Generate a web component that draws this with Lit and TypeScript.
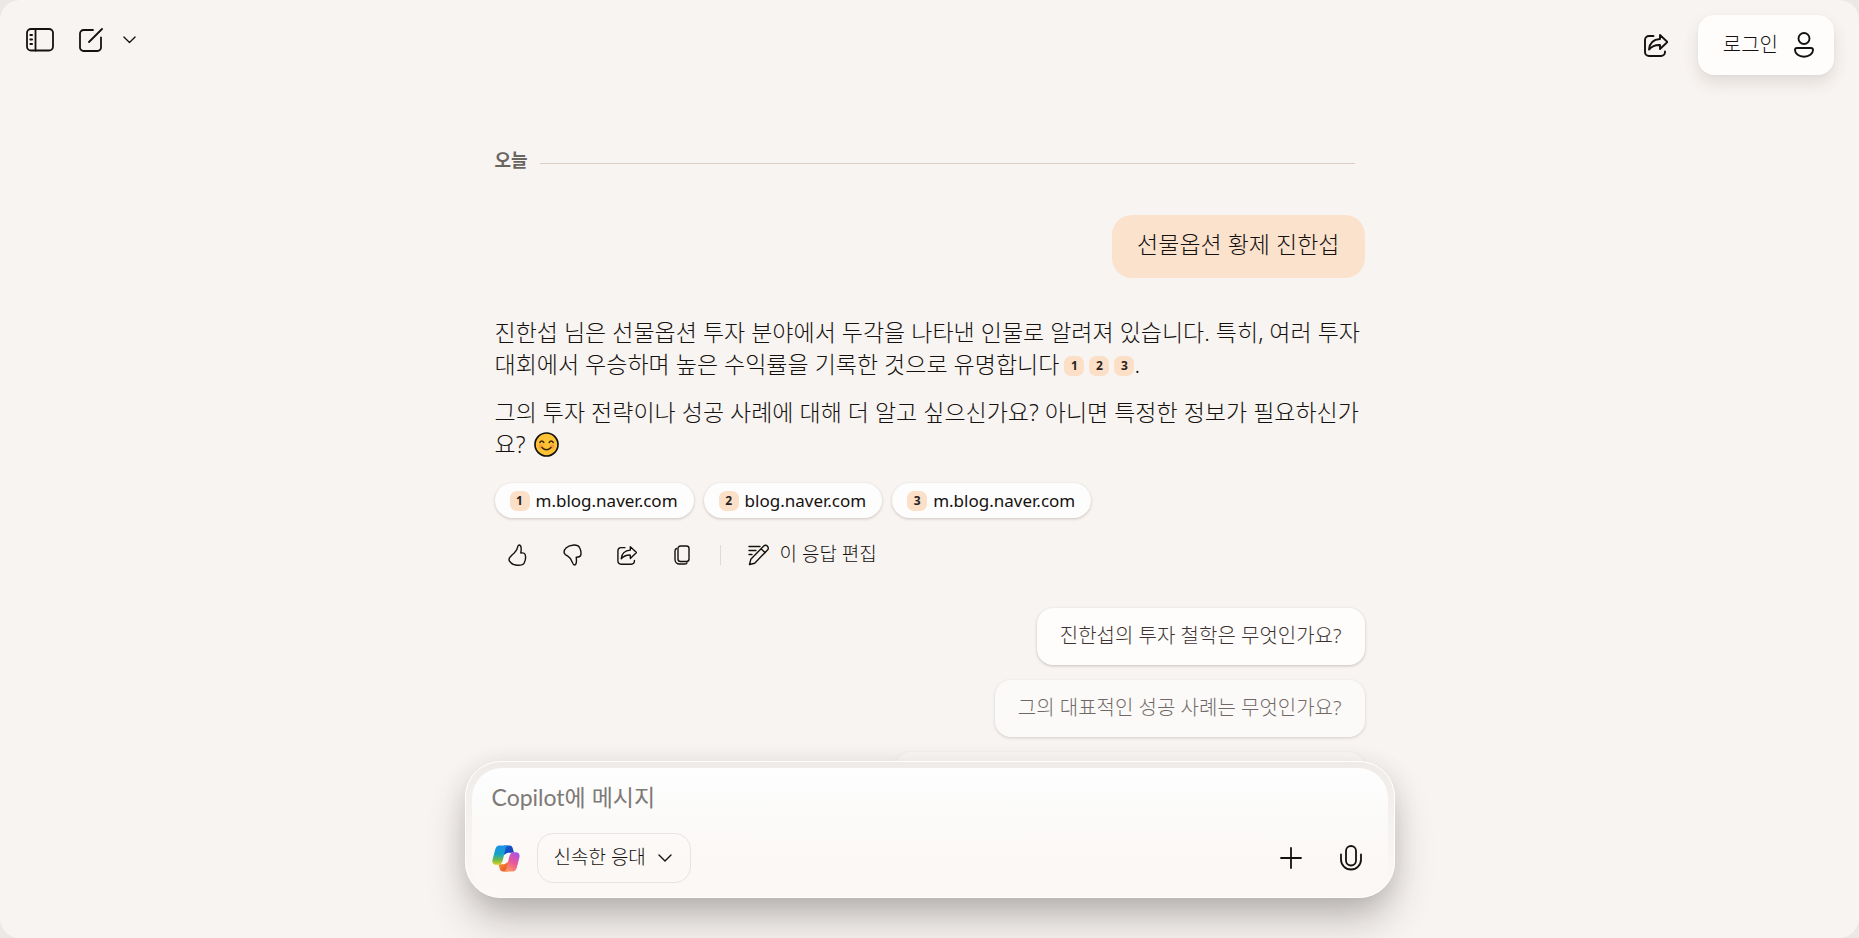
import { LitElement, html, css, svg } from "lit";
import { customElement, state } from "lit/decorators.js";

const icon = (w: number, h: number, body: unknown, sw = 1.5) => html`
  <svg class="icon" width=${w} height=${h} viewBox="0 0 ${w} ${h}" fill="none" stroke="currentColor"
    stroke-width=${sw} stroke-linecap="round" stroke-linejoin="round" aria-hidden="true">${body}</svg>`;

const sidebarIcon = icon(28, 24, svg`
  <rect x="1" y="1" width="26" height="21.5" rx="4"/>
  <path d="M9.5 1v21.5M4.3 7h1.8M4.3 11.5h1.8M4.3 16h1.8"/>`, 1.8);
const composeIcon = icon(24, 24, svg`
  <path d="M14 2H4.5A3.5 3.5 0 0 0 1 5.500v14A3.500 3.500 0 0 0 4.500 23H18.500a3.500 3.500 0 0 0 3.500-3.500V9.500M23 1 10 14"/>`, 1.8);
const sharePath = svg`
  <path d="M9.500 2H5A4 4 0 0 0 1 6v12a4 4 0 0 0 4 4h12a4 4 0 0 0 4-4v-.5"/>
  <path d="M16 1l7.500 7L16 15v-4c-5-.3-8 1.200-11 4.500C5.500 9.500 9 5.500 16 5V1z"/>`;
const shareIcon = icon(24, 23, sharePath, 1.9);
const shareSmall = html`<svg class="icon" width="20" height="19" viewBox="0 0 24 23" fill="none" stroke="currentColor"
  stroke-width="1.700" stroke-linecap="round" stroke-linejoin="round" aria-hidden="true">${sharePath}</svg>`;
const personIcon = icon(20, 26, svg`
  <circle cx="10" cy="6.500" r="5.500"/>
  <path d="M3 16h14a2 2 0 0 1 2 2c0 4-4 6.700-9 6.700S1 22 1 18a2 2 0 0 1 2-2z"/>`, 1.9);
const upIcon = icon(19, 22, svg`<path d="M11.200 1C10 1 9.700 2.500 9.400 3.800 8.800 6.500 6.500 8.800 4 11 2.300 12.600.9 14 1 15.600c.1 1.500 1 2 1.900 3.100 1 1.500 3 2.400 6 2.500 3.200.2 6.200 0 7.300-2.200 1.200-2.400 1.600-6.500.9-8.600-.5-1.400-2-1.700-4.300-1.400.5-3 .9-8-1.600-8z"/>`, 1.4);
const downIcon = icon(19, 22, svg`<path d="M11.500 21c-1.300 0-1.700-1.500-2.200-2.800-.9-2.500-2.300-4.700-4.500-6-2.200-1.200-3.700-2.300-3.700-4C1 6.500 2 5 3.300 3.800 5 2.200 8 1.200 11 1c2.500-.1 4.500.7 5.500 2.500 1.300 2.300 1.800 5.300 1.300 7.500-.4 1.700-2 2.300-4.600 2.200.4 3 .6 7.800-1.700 7.800z"/>`, 1.4);
const copyIcon = icon(16, 20, svg`
  <rect x="4" y="1" width="11" height="15.500" rx="2.500"/>
  <path d="M2.500 3.500C1.500 4 1 4.700 1 6v8.500A4.500 4.500 0 0 0 5.500 19h5c1.200 0 2-.4 2.500-1.200"/>`, 1.4);
const editIcon = icon(22, 22, svg`
  <path d="M1.500 20.500l1.300-5.200L15.500 2.200a2.600 2.600 0 0 1 4 .1c1 1.200 1 2.600 0 3.700L6.700 19.200zM13 4.800l4.200 3.900M1 2.500h11M1 6.500h7M1 10.500h3"/>`, 1.4);
const chevron = (w: number) => html`<svg class="icon" width=${w} height=${w / 2 + 1} viewBox="0 0 14 8" fill="none"
  stroke="currentColor" stroke-width="1.400" stroke-linecap="round" stroke-linejoin="round" aria-hidden="true"><path d="M1 1l6 6 6-6"/></svg>`;
const plusIcon = icon(22, 22, svg`<path d="M11 1v20M1 11h20"/>`, 1.8);
const micIcon = icon(22, 26, svg`
  <rect x="6" y="1" width="10" height="19.500" rx="5"/>
  <path d="M1 9.500V14.500a10 10 0 0 0 20 0V9.500"/>`, 1.8);
const smile = html`<svg class="smile" width="25" height="25" viewBox="0 0 25 25" role="img" aria-label="😊">
  <circle cx="12.500" cy="12.500" r="11.500" fill="#fdc334" stroke="#111" stroke-width="1.700"/>
  <circle cx="6.800" cy="14.500" r="2.300" fill="#f99a3c"/><circle cx="18.200" cy="14.500" r="2.300" fill="#f99a3c"/>
  <path d="M5.800 10.500q2-2.800 4 0M15.200 10.500q2-2.800 4 0M8 15.500q4.500 4.500 9 0" fill="none" stroke="#3a2410" stroke-width="1.500" stroke-linecap="round"/>
</svg>`;
const logo = html`<svg class="icon" width="28" height="27" viewBox="0 0 28 27" aria-hidden="true">
  <defs>
    <linearGradient id="a" x1="0" y1="0" x2="0" y2="1"><stop offset="0" stop-color="#1b8fe8"/><stop offset=".45" stop-color="#15a5c8"/><stop offset=".75" stop-color="#6dbb4a"/><stop offset="1" stop-color="#e8cf1c"/></linearGradient>
    <linearGradient id="b" x1=".8" y1="0" x2=".3" y2="1"><stop offset="0" stop-color="#a455e8"/><stop offset=".5" stop-color="#e8559a"/><stop offset="1" stop-color="#ff9a5c"/></linearGradient>
    <linearGradient id="c" x1="0" y1="0" x2="1" y2="1"><stop offset="0" stop-color="#1460d0"/><stop offset="1" stop-color="#1a38b8"/></linearGradient>
    <linearGradient id="d" x1="0" y1="0" x2="1" y2="1"><stop offset="0" stop-color="#f9a02c"/><stop offset="1" stop-color="#e6452f"/></linearGradient>
  </defs>
  <path d="M12 .5h5.500c2 0 2.800 1.200 3.300 3l1.200 4.200h-3.500c-2.300 0-4 .3-5 1.300l-1.500 1z" fill="url(#c)"/>
  <path d="M16 26.500h-5c-2 0-2.800-1.200-3.300-3L6.500 19.300H10c2.300 0 3.500-.3 4.500-1.300l1.500-1z" fill="url(#d)"/>
  <path d="M7.500.5h8.800c-1.800.6-2.400 2-3 4L10.800 15c-.8 2.800-1.900 4.800-4.600 4.800H4.300C1 19.800 0 17.500.6 14.500L3.200 4.600C4 2 5.200.5 7.500.5z" fill="url(#a)"/>
  <path d="M20.500 26.500h-8.800c1.800-.6 2.400-2 3-4L17.200 12c.8-2.800 1.900-4.800 4.600-4.800h1.900c3.300 0 4.300 2.300 3.700 5.300l-2.600 9.900c-.8 2.600-2 4.100-4.300 4.100z" fill="url(#b)"/>
</svg>`;

@customElement("app-root")
export class AppRoot extends LitElement {
  @state() private draft = "";

  private sources = ["m.blog.naver.com", "blog.naver.com", "m.blog.naver.com"];

  static styles = css`
    :host {
      display: block;
      height: 100vh;
      overflow: hidden;
      background: #ebe8e5;
      color: #14110f;
      font-family: "Noto Sans", "Noto Sans CJK KR", sans-serif;
      font-weight: 300;
    }
    * { box-sizing: border-box; }
    button, select, input, textarea { font: inherit; color: inherit; margin: 0; border: 0; background: none; padding: 0; }
    button, select { cursor: pointer; }
    .icon { display: block; flex: none; }
    .page {
      position: relative;
      height: 100%;
      overflow: hidden;
      border-radius: 20px;
      background: #f8f4f1;
    }
    .top {
      position: absolute;
      inset: 0 0 auto 0;
      display: flex;
      justify-content: space-between;
      align-items: flex-start;
      padding: 15px 25px 0 26px;
      pointer-events: none;
    }
    .top > * { pointer-events: auto; }
    .tools { display: flex; align-items: center; height: 50px; gap: 25px; }
    .tools .more { margin-left: -5px; }
    .account { display: flex; align-items: center; gap: 30px; }
    .login {
      display: flex;
      align-items: center;
      gap: 16px;
      height: 60px;
      padding: 0 20px 0 25px;
      border-radius: 16px;
      background: #fefdfc;
      box-shadow: 0 8px 16px rgba(60, 50, 45, 0.12), 0 1px 3px rgba(60, 50, 45, 0.04);
      font-size: 20px;
      line-height: 30px;
    }
    .thread {
      display: flex;
      flex-direction: column;
      width: 100%;
      max-width: 930px;
      margin: 0 auto;
      padding: 145px 30px 0;
    }
    .day { display: flex; align-items: center; gap: 12px; margin: 0 10px 0 0; color: #6b6562; font-size: 18px; line-height: 30px; font-weight: 700; }
    .day::after { content: ""; flex: 1; height: 1px; margin-top: 6px; background: #dccdc4; }
    .question {
      align-self: flex-end;
      margin: 40px 0 38px;
      padding: 13px 25px 18px;
      border-radius: 20px;
      background: #fbe2cd;
      font-size: 23px;
      line-height: 32px;
    }
    .answer { display: flex; flex-direction: column; gap: 16px; font-size: 23px; line-height: 32px; }
    .answer p { margin: 0; word-break: break-all; }
    .num {
      display: inline-block;
      width: 20px;
      height: 20px;
      border-radius: 7px;
      background: #fbdfc6;
      color: #272320;
      font-size: 12px;
      line-height: 20px;
      font-weight: 700;
      text-align: center;
      text-decoration: none;
    }
    .cite { margin-left: 5px; vertical-align: 3px; }
    .smile { display: inline-block; margin-left: 3px; vertical-align: -4px; }
    .sources { display: flex; flex-wrap: wrap; gap: 10px; margin: 23px 0 0; padding: 0; list-style: none; }
    .source {
      display: flex;
      align-items: center;
      gap: 6px;
      height: 35px;
      padding: 0 16px 0 15px;
      border-radius: 18px;
      background: #fefdfd;
      box-shadow: 0 1px 3px rgba(60, 40, 30, 0.24);
      color: inherit;
      font-size: 17px;
      font-weight: 400;
      text-decoration: none;
    }
    .actions { display: flex; align-items: center; height: 40px; margin-top: 17px; }
    .act { display: grid; place-items: center; width: 45px; height: 40px; margin-right: 10px; }
    .rule { width: 1px; height: 20px; background: #dfdad6; margin: 0 27px 0 5px; }
    .edit { display: flex; align-items: center; gap: 10px; font-size: 19px; line-height: 28px; }
    .edit span { padding-bottom: 2px; }
    .suggestions { display: flex; flex-direction: column; align-items: flex-end; gap: 15px; margin-top: 33px; font-size: 20px; line-height: 30px; color: #3d3332; }
    .suggestion {
      height: 57px;
      padding: 0 23px 2px;
      border-radius: 16px;
      background: #fefdfc;
      box-shadow: 0 1px 3px rgba(60, 40, 30, 0.26);
    }
    .suggestion.dim { opacity: 0.72; }
    .suggestion.faint { opacity: 0.35; width: 470px; max-width: 100%; }
    .composer {
      position: absolute;
      inset: auto 0 40px 0;
      width: 100%;
      max-width: 930px;
      margin: 0 auto;
      padding: 6px 6px 0;
      border: 1px solid #fff;
      border-radius: 36px;
      background: linear-gradient(#efebe8, #fcf8f6 92%);
      box-shadow: 0 24px 40px -4px rgba(50, 48, 46, 0.3), 0 4px 24px rgba(50, 48, 46, 0.1);
    }
    .box { padding: 12px 12px 14px 20px; border-radius: 30px; background: linear-gradient(#fefefe, #fbfaf9 40%, #fcf8f6 70%); }
    .entry {
      display: block;
      width: 100%;
      height: 34px;
      resize: none;
      outline: none;
      overflow: hidden;
      font-family: Lato, "Noto Sans CJK KR", sans-serif;
      font-size: 23px;
      font-weight: 400;
      line-height: 34px;
    }
    .entry::placeholder { color: #7d7976; opacity: 1; }
    .bar { display: flex; align-items: center; margin-top: 19px; }
    .mode { display: grid; align-items: center; margin-left: 17px; }
    .mode select {
      grid-area: 1 / 1;
      appearance: none;
      height: 50px;
      padding: 0 43px 2px 16px;
      border: 1px solid #e9e4e1;
      border-radius: 16px;
      font-size: 19px;
    }
    .mode .icon { grid-area: 1 / 1; justify-self: end; margin-right: 19px; pointer-events: none; }
    .bar .add { margin: 0 10px 0 auto; }
    .round { display: grid; place-items: center; width: 50px; height: 50px; }
  `;

  render() {
    return html`
      <div class="page">
        <header class="top">
          <nav class="tools">
            <button aria-label="사이드바">${sidebarIcon}</button>
            <button aria-label="새 채팅">${composeIcon}</button>
            <button class="more" aria-label="더 보기">${chevron(13)}</button>
          </nav>
          <div class="account">
            <button aria-label="공유">${shareIcon}</button>
            <button class="login">로그인 ${personIcon}</button>
          </div>
        </header>

        <main class="thread">
          <h2 class="day">오늘</h2>
          <div class="question">선물옵션 황제 진한섭</div>
          <article class="answer">
            <p>진한섭 님은 선물옵션 투자 분야에서 두각을 나타낸 인물로 알려져 있습니다. 특히, 여러 투자 대회에서 우승하며 높은 수익률을 기록한 것으로 유명합니다${this.sources.map(
              (s, i) => html`<a class="num cite" href="https://${s}">${i + 1}</a>`)}.</p>
            <p>그의 투자 전략이나 성공 사례에 대해 더 알고 싶으신가요? 아니면 특정한 정보가 필요하신가요? ${smile}</p>
          </article>
          <ul class="sources">
            ${this.sources.map((s, i) => html`<li><a class="source" href="https://${s}"><span class="num">${i + 1}</span>${s}</a></li>`)}
          </ul>
          <div class="actions">
            <button class="act" aria-label="좋아요">${upIcon}</button>
            <button class="act" aria-label="싫어요">${downIcon}</button>
            <button class="act" aria-label="공유">${shareSmall}</button>
            <button class="act" aria-label="복사">${copyIcon}</button>
            <span class="rule"></span>
            <button class="edit">${editIcon}<span>이 응답 편집</span></button>
          </div>
          <div class="suggestions">
            <button class="suggestion">진한섭의 투자 철학은 무엇인가요?</button>
            <button class="suggestion dim">그의 대표적인 성공 사례는 무엇인가요?</button>
            <div class="suggestion faint"></div>
          </div>
        </main>

        <form class="composer" @submit=${(e: Event) => e.preventDefault()}>
          <div class="box">
            <textarea class="entry" rows="1" aria-label="Copilot에 메시지" placeholder="Copilot에 메시지" .value=${this.draft}
              @input=${(e: Event) => (this.draft = (e.target as HTMLTextAreaElement).value)}></textarea>
            <div class="bar">
              ${logo}
              <div class="mode">
                <select aria-label="대화 모드"><option>신속한 응대</option></select>
                ${chevron(14)}
              </div>
              <button class="round add" type="button" aria-label="추가">${plusIcon}</button>
              <button class="round" type="button" aria-label="음성">${micIcon}</button>
            </div>
          </div>
        </form>
      </div>
    `;
  }
}
